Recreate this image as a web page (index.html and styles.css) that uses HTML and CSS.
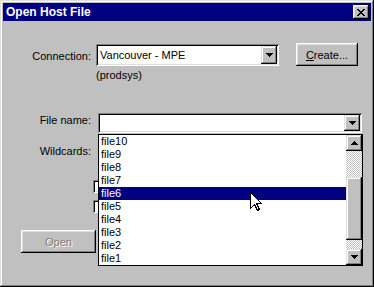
FILE: index.html
```html
<!DOCTYPE html>
<html>
<head>
<meta charset="utf-8">
<title>Open Host File</title>
<link rel="stylesheet" href="styles.css">
</head>
<body>
<div class="window">
  <div class="titlebar">
    <span class="title">Open Host File</span>
    <span class="close">
      <svg width="8" height="7" viewBox="0 0 8 7" shape-rendering="crispEdges"><path d="M0 0h2v1H0zM6 0h2v1H6zM1 1h2v1H1zM5 1h2v1H5zM2 2h4v1H2zM3 3h2v1H3zM2 4h4v1H2zM1 5h2v1H1zM5 5h2v1H5zM0 6h2v1H0zM6 6h2v1H6z" fill="#000"/></svg>
    </span>
  </div>
  <div class="body">
    <div class="row conn">
      <span class="lbl">Connection:</span>
      <div class="combo conn-combo">
        <span class="val">Vancouver - MPE</span>
        <span class="dd"><svg width="7" height="4" viewBox="0 0 7 4" shape-rendering="crispEdges"><path d="M0 0h7v1H0zM1 1h5v1H1zM2 2h3v1H2zM3 3h1v1H3z" fill="#000"/></svg></span>
      </div>
      <span class="btn create"><u>C</u>reate...</span>
    </div>
    <div class="sub">(prodsys)</div>
    <div class="row fname">
      <span class="lbl">File name:</span>
      <div class="combo fn-combo">
        <span class="val"></span>
        <span class="dd"><svg width="7" height="4" viewBox="0 0 7 4" shape-rendering="crispEdges"><path d="M0 0h7v1H0zM1 1h5v1H1zM2 2h3v1H2zM3 3h1v1H3z" fill="#000"/></svg></span>
        <div class="droplist">
          <div class="items">
            <div class="item">file10</div>
            <div class="item">file9</div>
            <div class="item">file8</div>
            <div class="item">file7</div>
            <div class="item sel">file6</div>
            <div class="item">file5</div>
            <div class="item">file4</div>
            <div class="item">file3</div>
            <div class="item">file2</div>
            <div class="item">file1</div>
          </div>
          <div class="sb">
            <span class="sbtn"><svg width="7" height="4" viewBox="0 0 7 4" shape-rendering="crispEdges"><path d="M3 0h1v1H3zM2 1h3v1H2zM1 2h5v1H1zM0 3h7v1H0z" fill="#000"/></svg></span>
            <span class="track t1"></span>
            <span class="thumb"></span>
            <span class="track t2"></span>
            <span class="sbtn"><svg width="7" height="4" viewBox="0 0 7 4" shape-rendering="crispEdges"><path d="M0 0h7v1H0zM1 1h5v1H1zM2 2h3v1H2zM3 3h1v1H3z" fill="#000"/></svg></span>
          </div>
        </div>
      </div>
    </div>
    <div class="row wild">
      <span class="lbl">Wildcards:</span>
    </div>
    <div class="checks">
      <span class="cb"></span>
      <span class="cb"></span>
    </div>
    <div class="actions">
      <span class="btn open">Open</span>
    </div>
  </div>
  <svg class="cursor" width="13" height="20" viewBox="0 0 13 20" shape-rendering="crispEdges">
    <path d="M0.5 0.5V16.5L4.5 12.5L7.5 18.5L9.5 17.5L6.5 11.5H11.5Z" fill="#fff" stroke="#000" stroke-width="1"/>
  </svg>
</div>
</body>
</html>
```
FILE: styles.css
```css
html, body {
  margin: 0;
  padding: 0;
  background: #c0c0c0;
}

.window {
  position: relative;
  width: 374px;
  height: 287px;
  box-sizing: border-box;
  padding: 3px;
  background: #c0c0c0;
  box-shadow: inset -1px -1px #000, inset 1px 1px #dfdfdf, inset -2px -2px #808080, inset 2px 2px #fff;
  font-family: "Liberation Sans", Arial, sans-serif;
  font-size: 11px;
  color: #000;
  overflow: hidden;
}

.titlebar {
  height: 18px;
  background: #000080;
  color: #fff;
  display: flex;
  align-items: center;
  justify-content: space-between;
  padding-left: 3px;
  font-weight: bold;
  font-size: 12px;
}

.close {
  width: 16px;
  height: 14px;
  margin-right: 2px;
  box-sizing: border-box;
  background: #c0c0c0;
  box-shadow: inset -1px -1px #000, inset 1px 1px #fff, inset -2px -2px #808080, inset 2px 2px #dfdfdf;
  display: flex;
  align-items: center;
  justify-content: center;
  padding-right: 1px;
}

.close svg { display: block; }

.body {
  padding-top: 22px;
}

.row {
  display: flex;
  align-items: flex-start;
}

.lbl {
  width: 88px;
  text-align: right;
  line-height: 13px;
  white-space: nowrap;
}

.conn {
  height: 23px;
}

.conn .lbl {
  margin-top: 7px;
}

.combo {
  position: relative;
  box-sizing: border-box;
  padding: 2px;
  background: #fff;
  display: flex;
  box-shadow: inset 1px 1px #808080, inset -1px -1px #fff, inset 2px 2px #000, inset -2px -2px #dfdfdf;
}

.combo .val {
  flex: 1;
  padding-left: 2px;
  line-height: 18px;
  white-space: nowrap;
}

.dd, .sbtn {
  width: 16px;
  box-sizing: border-box;
  background: #c0c0c0;
  box-shadow: inset -1px -1px #000, inset 1px 1px #dfdfdf, inset -2px -2px #808080, inset 2px 2px #fff;
  display: flex;
  align-items: center;
  justify-content: center;
}

.dd svg, .sbtn svg { display: block; }

.conn-combo {
  margin-left: 5px;
  margin-top: 1px;
  width: 183px;
  height: 22px;
}

.btn {
  box-sizing: border-box;
  background: #c0c0c0;
  box-shadow: inset -1px -1px #000, inset 1px 1px #fff, inset -2px -2px #808080, inset 2px 2px #dfdfdf;
  display: flex;
  align-items: center;
  justify-content: center;
  height: 23px;
  padding-top: 1px;
}

.create {
  margin-left: 17px;
  width: 62px;
}

.sub {
  margin-left: 93px;
  margin-top: 3px;
  line-height: 13px;
}

.fname {
  margin-top: 31px;
}

.fname .lbl {
  margin-top: 1px;
}

.fn-combo {
  margin-left: 7px;
  width: 264px;
  height: 20px;
}

.droplist {
  position: absolute;
  left: 0;
  top: 21px;
  width: 265px;
  height: 132px;
  box-sizing: border-box;
  border: 1px solid #000;
  background: #fff;
  display: flex;
  z-index: 2;
}

.items {
  flex: 1;
}

.item {
  height: 13px;
  line-height: 13px;
  padding-left: 2px;
}

.item.sel {
  background: #000080;
  color: #fff;
}

.sb {
  width: 16px;
  display: flex;
  flex-direction: column;
}

.sbtn {
  height: 16px;
}

.track {
  background: repeating-conic-gradient(#c0c0c0 0 25%, #fff 0 50%) 0 0 / 2px 2px;
}

.t1 { height: 26px; }
.t2 { height: 9px; }

.thumb {
  height: 63px;
  background: #c0c0c0;
  box-shadow: inset -1px -1px #000, inset 1px 1px #dfdfdf, inset -2px -2px #808080, inset 2px 2px #fff;
}

.wild {
  margin-top: 12px;
}

.checks {
  margin-top: 22px;
  margin-left: 90px;
  display: flex;
  flex-direction: column;
  gap: 7px;
}

.cb {
  width: 13px;
  height: 13px;
  box-sizing: border-box;
  background: #fff;
  box-shadow: inset 1px 1px #808080, inset -1px -1px #fff, inset 2px 2px #000, inset -2px -2px #dfdfdf;
}

.actions {
  margin-top: 17px;
  margin-left: 18px;
}

.open {
  width: 75px;
  color: #808080;
  text-shadow: 1px 1px #fff;
}

.cursor {
  position: absolute;
  left: 250px;
  top: 192px;
  z-index: 5;
}
```
